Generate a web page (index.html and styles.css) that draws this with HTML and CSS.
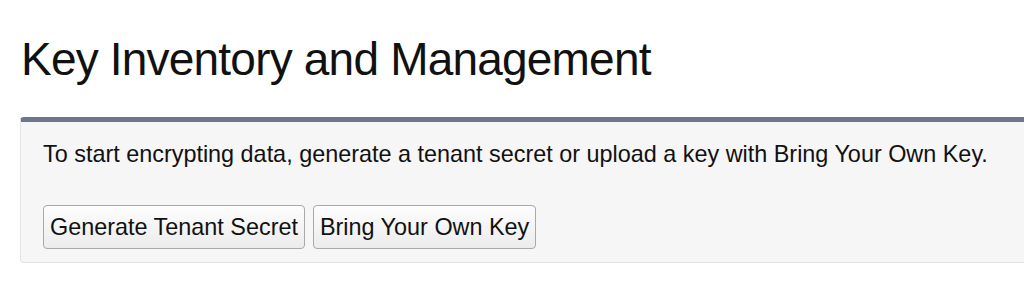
FILE: index.html
```html
<!DOCTYPE html>
<html lang="en">
<head>
    <meta charset="UTF-8">
    <meta name="viewport" content="width=device-width, initial-scale=1.0">
    <title>Key Inventory and Management</title>
    <link rel="stylesheet" href="styles.css">
</head>
<body>
    <h1 class="page-title">Key Inventory and Management</h1>

    <div class="key-panel">
        <p class="key-panel-text">To start encrypting data, generate a tenant secret or upload a key with Bring Your Own Key.</p>
        <div class="key-actions">
            <button class="key-btn" type="button">Generate Tenant Secret</button>
            <button class="key-btn" type="button">Bring Your Own Key</button>
        </div>
    </div>
</body>
</html>
```

FILE: styles.css
```css
body {
    margin: 0;
    font-family: "Liberation Sans", Arial, sans-serif;
    color: #111;
    background: #fff;
    overflow: hidden;
}
.page-title {
    font-weight: normal;
    font-size: 46px;
    line-height: 54px;
    margin: 32px 0 0 21px;
    letter-spacing: -0.8px;
}
.key-panel {
    margin: 31px -10px 0 20px;
    background: #f6f6f6;
    border: 1px solid #e4e4e4;
    border-top: 5px solid #6c768f;
    border-radius: 4px;
    padding: 18px 22px 13px 22px;
}
.key-panel-text {
    margin: 0;
    font-size: 23.4px;
    line-height: 28px;
}
.key-actions {
    display: flex;
    gap: 8px;
    margin-top: 37px;
}
.key-btn {
    font-family: "Liberation Sans", Arial, sans-serif;
    font-size: 23.4px;
    color: #111;
    height: 44px;
    padding: 0 6px;
    border: 1px solid #a9a9a9;
    border-radius: 4px;
    background: linear-gradient(#fdfdfd, #ececec);
}
```
